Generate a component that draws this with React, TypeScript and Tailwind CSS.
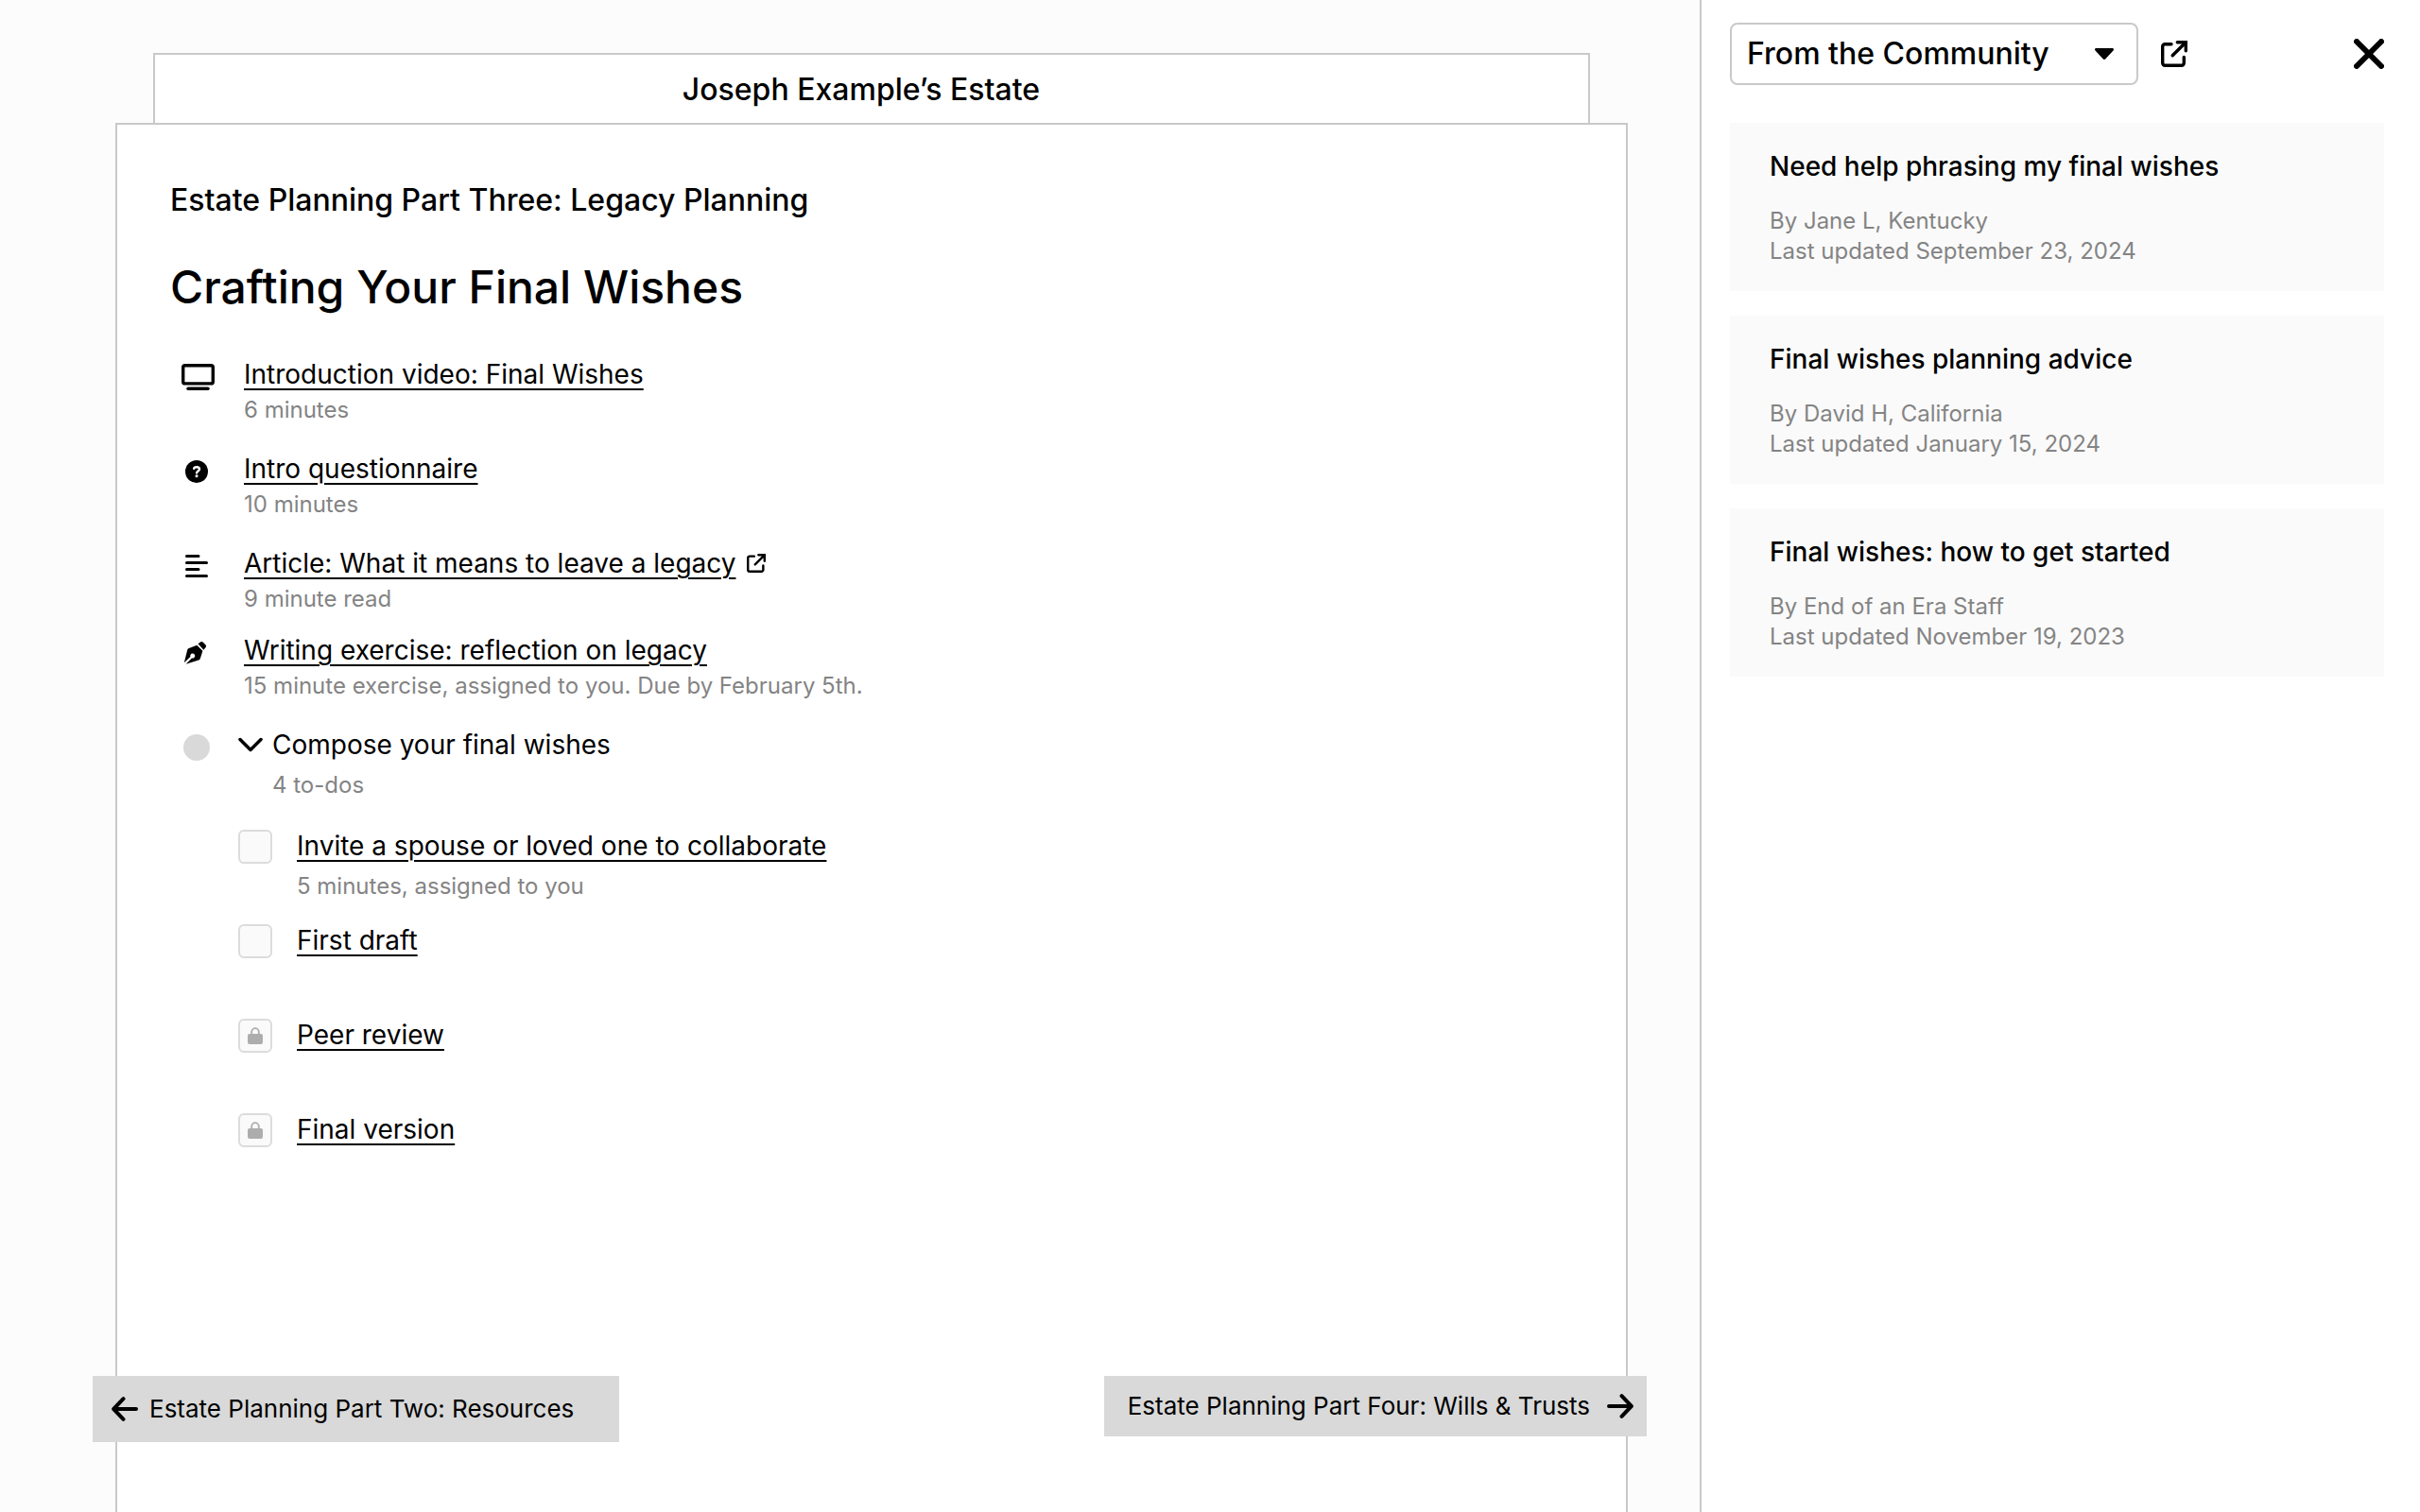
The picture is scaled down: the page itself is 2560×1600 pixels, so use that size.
import React from "react";

type IconProps = { className?: string };

function TvIcon() {
  return (
    <svg viewBox="-4 0 40 28" className="h-7 w-10 shrink-0" fill="none" stroke="#000" strokeWidth="3.4">
      <rect x="1.7" y="1.7" width="31.6" height="19.200" rx="2" />
      <path d="M7 26.3h21" strokeLinecap="round" />
    </svg>
  );
}

function QuestionIcon() {
  return (
    <svg viewBox="0 0 24 24" className="size-6">
      <circle cx="12" cy="12" r="12" fill="#000" />
      <path d="M9.200 8.800C9.300 7.700 10.200 7.200 12 7.200c1.900 0 3 .8 3 2.300 0 2-2.900 2-2.900 3.900" fill="none" stroke="#fff" strokeWidth="2.400" strokeLinecap="round" />
      <circle cx="12" cy="16.700" r="1.500" fill="#fff" />
    </svg>
  );
}

function ArticleIcon() {
  return (
    <svg viewBox="0 0 24 24" className="size-6" stroke="#000" strokeWidth="3" strokeLinecap="round">
      <path d="M1.500 1.500h12.500M1.500 8.500h21M1.500 15.500h12.500M1.500 22.500h21" />
    </svg>
  );
}

function PenIcon() {
  return (
    <svg viewBox="0 0 28 24" className="h-6 w-7">
      <path d="M15.500 2.200 18 .4c1-.6 2-.5 2.900.3l2.500 2.500c.8.9.8 1.900.2 2.800l-2.200 2.700z" />
      <path d="m14.300 3.800 6.100 6-2.600 8.200c-.3.8-.8 1.300-1.600 1.500L2.600 23.800l6.300-6.400a2.500 2.500 0 1 0-1.500-1.500L.8 22.300 4.300 8.500c.2-.8.8-1.400 1.500-1.600z" />
    </svg>
  );
}

function ExternalIcon({ className }: IconProps) {
  return (
    <svg viewBox="0 0 28 28" className={className} fill="none" stroke="#000" strokeWidth="3.4" strokeLinecap="round">
      <path d="M11 3.700H4.200a2.500 2.500 0 0 0-2.500 2.500v17.600a2.500 2.500 0 0 0 2.500 2.500h17.600a2.500 2.500 0 0 0 2.500-2.500V17.500" />
      <path d="M17.300 1.700h9v9M25.500 2.500 12.200 15.800" />
    </svg>
  );
}

function ArrowIcon({ className }: IconProps) {
  return (
    <svg viewBox="0 0 28 26" className={className} fill="none" stroke="#000" strokeWidth="4" strokeLinecap="round" strokeLinejoin="round">
      <path d="M26 13H2.500M12.500 2.200 2.200 13l10.300 10.800" />
    </svg>
  );
}

function LockIcon() {
  return (
    <svg viewBox="0 0 16 18" className="pointer-events-none col-start-1 row-start-1 h-[18px] w-4">
      <path d="M4.200 9V5a3.800 3.800 0 0 1 7.600 0v4" fill="none" stroke="#adadad" strokeWidth="1.800" />
      <rect y="7" width="16" height="11" rx="2" fill="#adadad" />
    </svg>
  );
}

const link = "text-[28px] leading-[34px] underline decoration-2 underline-offset-[5px]";
const note = "text-2xl leading-8 text-[#848484]";

type Step = { icon: React.ReactNode; title: string; detail: string; external?: boolean; gap: string };

const steps: Step[] = [
  { icon: <TvIcon />, title: "Introduction video: Final Wishes", detail: "6 minutes", gap: "pb-[29px]" },
  { icon: <QuestionIcon />, title: "Intro questionnaire", detail: "10 minutes", gap: "pb-[29px]" },
  { icon: <ArticleIcon />, title: "Article: What it means to leave a legacy", detail: "9 minute read", external: true, gap: "pb-[21px]" },
  { icon: <PenIcon />, title: "Writing exercise: reflection on legacy", detail: "15 minute exercise, assigned to you. Due by February 5th.", gap: "pb-[29px]" },
];

const todos = [
  { id: "invite", title: "Invite a spouse or loved one to collaborate", detail: "5 minutes, assigned to you", locked: false },
  { id: "draft", title: "First draft", detail: "", locked: false },
  { id: "peer", title: "Peer review", detail: "", locked: true },
  { id: "final", title: "Final version", detail: "", locked: true },
];

const posts = [
  { title: "Need help phrasing my final wishes", author: "By Jane L, Kentucky", date: "Last updated September 23, 2024" },
  { title: "Final wishes planning advice", author: "By David H, California", date: "Last updated January 15, 2024" },
  { title: "Final wishes: how to get started", author: "By End of an Era Staff", date: "Last updated November 19, 2023" },
];

export default function App() {
  return (
    <div className="flex min-h-screen bg-[#fcfcfc] font-['Inter',sans-serif] text-black">
      <main className="flex min-w-0 flex-1 flex-col pt-14 pr-[76px] pl-[122px]">
        <header className="mx-10 border-2 border-b-0 border-[#c9c9c9] bg-white pt-[18px] pr-[22px] pb-4 text-center text-[32px] leading-[38px] font-medium">
          Joseph Example’s Estate
        </header>
        <section className="flex flex-1 flex-col border-2 border-b-0 border-[#c9c9c9] bg-white pt-[60px]">
          <div className="px-14">
            <h2 className="text-[32px] leading-10 font-medium">Estate Planning Part Three: Legacy Planning</h2>
            <h1 className="mt-[43px] text-5xl leading-[58px] font-medium">Crafting Your Final Wishes</h1>
            <ul className="mt-[46px]">
              {steps.map((s) => (
                <li key={s.title} className={`flex ${s.gap}`}>
                  <span className="flex h-10 w-[78px] shrink-0 items-center pl-3">
                    <span className="flex w-8 justify-center">{s.icon}</span>
                  </span>
                  <div>
                    <div className="flex items-center gap-3">
                      <a href="#" className={link}>{s.title}</a>
                      {s.external && <ExternalIcon className="size-5" />}
                    </div>
                    <p className={`mt-[5px] ${note}`}>{s.detail}</p>
                  </div>
                </li>
              ))}
              <li className="flex">
                <span className="flex h-10 w-[72px] shrink-0 items-center pl-[14px]">
                  <span className="size-7 rounded-full bg-[#d9d9d9]" />
                </span>
                <div>
                  <button type="button" aria-expanded="true" className="flex items-center gap-[10px] text-[28px] leading-[34px]">
                    <svg viewBox="0 0 26 16" className="h-4 w-[26px]" fill="none" stroke="#000" strokeWidth="3.500" strokeLinecap="round" strokeLinejoin="round">
                      <path d="M2 2.500 13 13.500 24 2.500" />
                    </svg>
                    Compose your final wishes
                  </button>
                  <p className={`mt-[10px] pl-9 ${note}`}>4 to-dos</p>
                  <ul className="mt-[31px]">
                    {todos.map((t) => (
                      <li key={t.id} className="flex min-h-[100px] gap-[26px]">
                        <span className="grid size-9 shrink-0 place-items-center">
                          <input
                            id={t.id}
                            type="checkbox"
                            disabled={t.locked}
                            aria-label={t.title}
                            className="col-start-1 row-start-1 size-9 appearance-none rounded-md border-2 border-[#dcdcdc] bg-[#fafafa] checked:bg-[#adadad]"
                          />
                          {t.locked && <LockIcon />}
                        </span>
                        <div>
                          <a href="#" className={link}>{t.title}</a>
                          {t.detail && <p className={`mt-[10px] ${note}`}>{t.detail}</p>}
                        </div>
                      </li>
                    ))}
                  </ul>
                </div>
              </li>
            </ul>
          </div>
          <nav aria-label="Parts" className="mt-auto -mr-[22px] -ml-[26px] flex items-start justify-between pb-[74px] text-[26px] leading-8">
            <a href="#" className="flex h-[70px] items-center gap-3 bg-[#d9d9d9] pr-12 pl-5">
              <ArrowIcon className="h-[26px] w-7" />
              Estate Planning Part Two: Resources
            </a>
            <a href="#" className="flex h-16 items-center gap-[18px] bg-[#d9d9d9] pr-[14px] pl-[25px]">
              Estate Planning Part Four: Wills &amp; Trusts
              <ArrowIcon className="h-[26px] w-7 rotate-180" />
            </a>
          </nav>
        </section>
      </main>

      <aside className="w-[762px] shrink-0 border-l-2 border-[#c9c9c9] bg-white pt-6 pr-[38px] pl-[30px]">
        <div className="flex items-center">
          <div className="grid items-center">
            <select
              aria-label="Resource source"
              defaultValue="community"
              className="col-start-1 row-start-1 h-[66px] w-[432px] appearance-none rounded-lg border-2 border-[#c9c9c9] bg-white px-4 text-[32px] leading-10 font-medium"
            >
              <option value="community">From the Community</option>
            </select>
            <svg viewBox="0 0 20 12" className="pointer-events-none col-start-1 row-start-1 mr-[26px] h-3 w-5 justify-self-end">
              <path d="M1.500 0h17c1.400 0 2 1.400 1 2.400l-8.100 8.900c-.8.900-2 .9-2.800 0L.5 2.400C-.5 1.400.1 0 1.500 0z" />
            </svg>
          </div>
          <a href="#" aria-label="Open in new tab" className="ml-6">
            <ExternalIcon className="size-7" />
          </a>
          <button type="button" aria-label="Close" className="ml-auto">
            <svg viewBox="0 0 32 32" className="size-8" fill="none" stroke="#000" strokeWidth="6" strokeLinecap="round">
              <path d="m3 3 26 26M29 3 3 29" />
            </svg>
          </button>
        </div>
        <div className="mt-10 flex flex-col gap-[26px]">
          {posts.map((p) => (
            <article key={p.title} className="bg-[#fafafa] px-[42px] pt-[29px] pb-[26px]">
              <h3 className="text-[28px] leading-[34px] font-medium">{p.title}</h3>
              <div className={`mt-[25px] ${note}`}>
                <p>{p.author}</p>
                <p>{p.date}</p>
              </div>
            </article>
          ))}
        </div>
      </aside>
    </div>
  );
}
